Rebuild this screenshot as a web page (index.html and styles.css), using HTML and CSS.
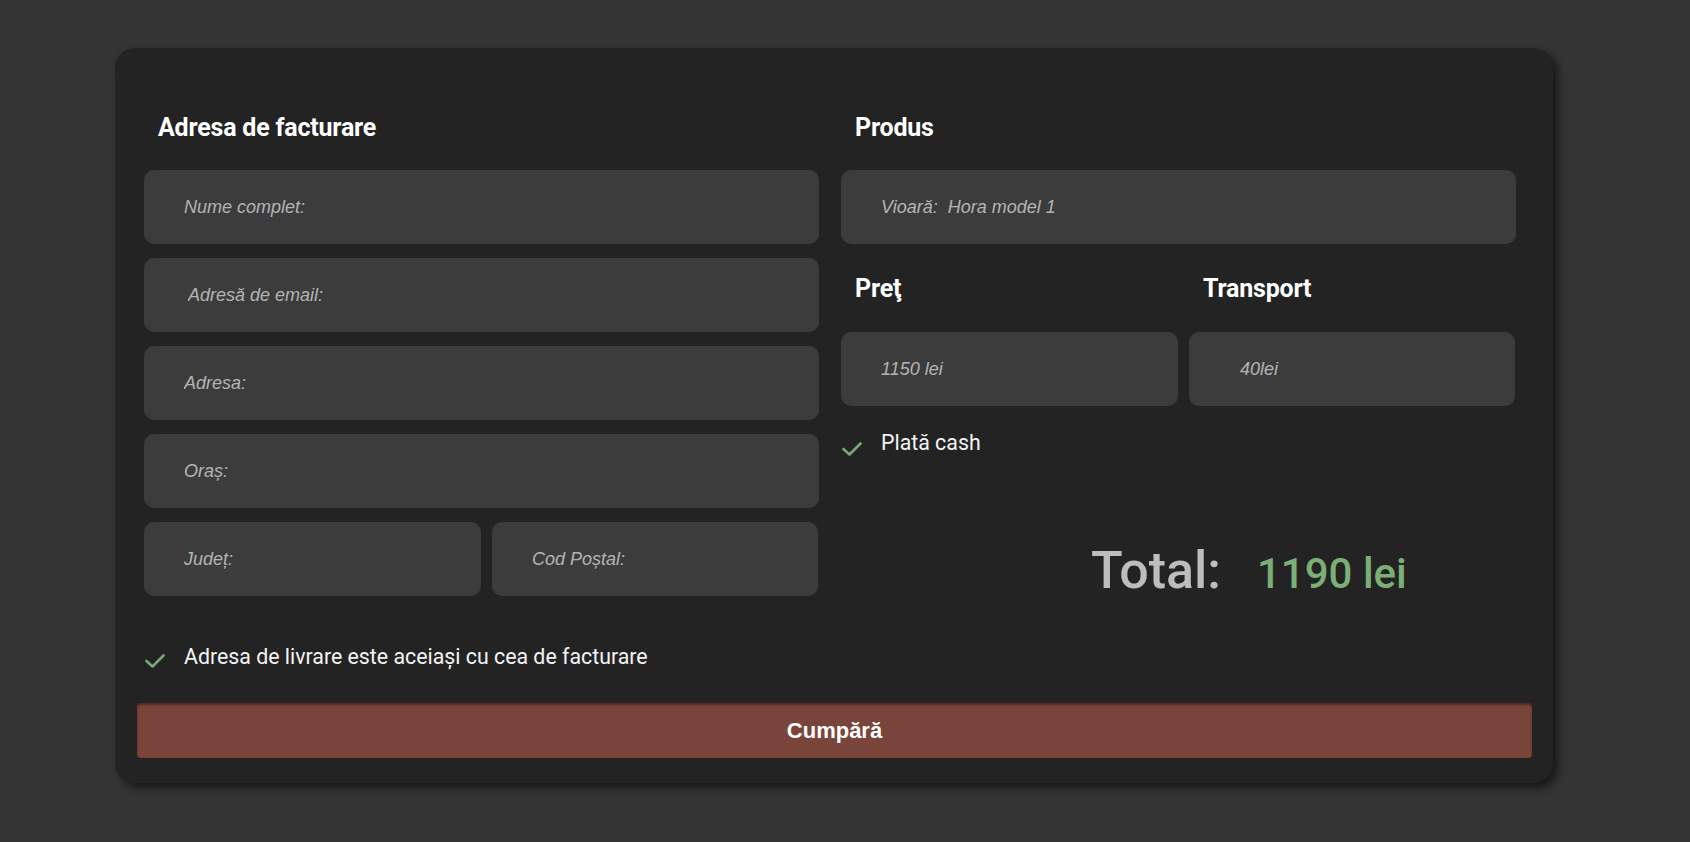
FILE: index.html
```html
<!DOCTYPE html>
<html lang="ro">
<head>
<meta charset="utf-8">
<title>Checkout</title>
<link rel="stylesheet" href="styles.css">
</head>
<body>
<main class="card">
  <form class="form">
    <section class="col">
      <h2 class="heading">Adresa de facturare</h2>
      <div class="fields">
        <input class="field" type="text" placeholder="Nume complet:">
        <input class="field field-email" type="email" placeholder="Adresă de email:">
        <input class="field" type="text" placeholder="Adresa:">
        <input class="field" type="text" placeholder="Oraș:">
        <div class="pair">
          <input class="field" type="text" placeholder="Județ:">
          <input class="field" type="text" placeholder="Cod Poștal:">
        </div>
      </div>
      <label class="check check-left">
        <svg class="tick" width="20" height="14" viewBox="0 0 20 14"><polyline points="1.5,7 7.5,12.5 18.5,1.5" fill="none" stroke="#78a874" stroke-width="2.6" stroke-linecap="round" stroke-linejoin="round"/></svg>
        <span>Adresa de livrare este aceiași cu cea de facturare</span>
      </label>
    </section>
    <section class="col">
      <h2 class="heading">Produs</h2>
      <input class="field field-product" type="text" value="Vioară:  Hora model 1" readonly>
      <div class="pair pair-price">
        <h2 class="heading">Preţ</h2>
        <h2 class="heading">Transport</h2>
        <input class="field" type="text" value="1150 lei" readonly>
        <input class="field field-transport" type="text" value="40lei" readonly>
      </div>
      <label class="check check-right">
        <svg class="tick" width="20" height="14" viewBox="0 0 20 14"><polyline points="1.5,7 7.5,12.5 18.5,1.5" fill="none" stroke="#78a874" stroke-width="2.6" stroke-linecap="round" stroke-linejoin="round"/></svg>
        <span>Plată cash</span>
      </label>
      <div class="total">
        <span class="total-label">Total:</span>
        <span class="total-value">1190 lei</span>
      </div>
    </section>
  </form>
  <button class="buy" type="button">Cumpără</button>
</main>
</body>
</html>
```
FILE: styles.css
```css
* { box-sizing: border-box; }

html, body {
  margin: 0;
  padding: 0;
}

body {
  background: #343434;
  width: 1690px;
  height: 842px;
  overflow: hidden;
  font-family: Roboto, "Liberation Sans", sans-serif;
  padding: 48px 0 0 115px;
}

.card {
  width: 1438px;
  height: 735px;
  background: #232323;
  border-radius: 20px;
  box-shadow: 5px 5px 9px rgba(0, 0, 0, 0.55);
  padding: 65px 21px 25px 22px;
  display: flex;
  flex-direction: column;
}

.form {
  display: grid;
  grid-template-columns: 675px 675px;
  column-gap: 22px;
  padding: 0 16px 0 7px;
  flex: 1;
  margin: 0;
}

.col {
  display: flex;
  flex-direction: column;
}

.heading {
  margin: 0 0 0 14px;
  height: 30px;
  line-height: 30px;
  font-size: 25px;
  font-weight: 700;
  color: #ffffff;
  letter-spacing: -0.2px;
}

.col > .heading {
  margin-bottom: 27px;
}

.fields {
  display: flex;
  flex-direction: column;
  gap: 14px;
}

.field {
  display: block;
  width: 100%;
  height: 74px;
  border: none;
  outline: none;
  border-radius: 10px;
  background: #3c3c3c;
  padding: 0 0 0 40px;
  font-family: "Liberation Sans", Arial, sans-serif;
  font-style: italic;
  font-size: 18px;
  color: #b4b4b4;
  margin: 0;
}

.field::placeholder {
  color: #b4b4b4;
  opacity: 1;
  font-style: italic;
}

.field-email { padding-left: 44px; }
.field-transport { padding-left: 51px; }

.pair {
  display: grid;
  grid-template-columns: 337px 326px;
  column-gap: 11px;
}

.pair-price {
  margin-top: 30px;
  row-gap: 28px;
}

.check {
  display: flex;
  align-items: flex-start;
  gap: 19px;
  font-size: 21.33px;
  line-height: 24px;
  color: #f4f4f4;
}

.tick {
  flex: none;
  margin-left: 1px;
}

.check-left {
  margin-top: 49px;
}

.check-left .tick { margin-top: 9px; }

.check-right {
  margin-top: 25px;
}

.check-right .tick { margin-top: 11px; }

.total {
  margin-top: 85px;
  padding-left: 250px;
  display: flex;
  align-items: baseline;
  gap: 36px;
  line-height: 60px;
}

.total-label {
  font-size: 52px;
  font-weight: 500;
  color: #bdbdbd;
}

.total-value {
  font-size: 42px;
  font-weight: 500;
  color: #7cae77;
}

.buy {
  height: 55px;
  width: 100%;
  border: none;
  border-radius: 4px;
  background: #794439;
  box-shadow: inset 0 2px 2px rgba(0, 0, 0, 0.35);
  color: #ffffff;
  font-family: "Liberation Sans", Arial, sans-serif;
  font-weight: 700;
  font-size: 22px;
  margin-top: auto;
  padding: 0;
}
```
